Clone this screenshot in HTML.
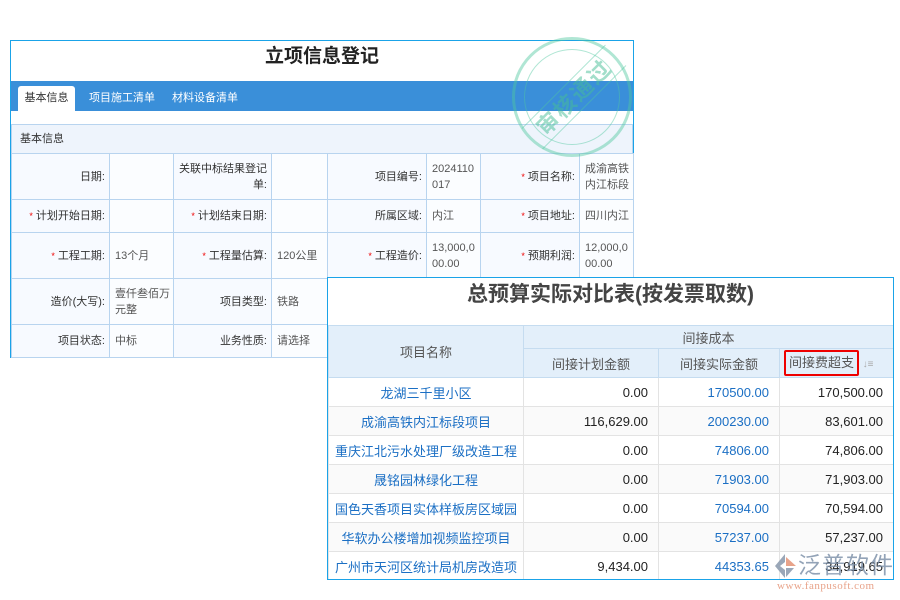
<!DOCTYPE html>
<html><head><meta charset="utf-8"><style>
*{box-sizing:border-box;margin:0;padding:0}
body{width:900px;height:600px;background:#fff;position:relative;overflow:hidden;font-family:"Liberation Sans","Noto Sans CJK SC",sans-serif;font-size:11px;color:#333}
.abs{position:absolute}
#p1{left:10px;top:40px;width:624px;height:318px;border:1px solid #1aa3e8;background:#fff}
#p1 .title{position:absolute;left:0;top:0;width:100%;height:40px;text-align:center;line-height:32px;font-size:19px;font-weight:bold;color:#222}
#tabs{position:absolute;left:0;top:40px;width:100%;height:30px;background:#3a8fd9}
#tabs span{position:absolute;top:5px;color:#fff;font-size:11px;line-height:25px}
#tabs .act{left:7px;width:57px;height:25px;background:#fff;color:#333;text-align:center;border-radius:3px 3px 0 0}
.sec{position:absolute;left:0;top:83px;width:622px;height:30px;background:#eef4fc;border:1px solid #b8d4ef;line-height:28px;padding-left:8px;color:#333}
table{border-collapse:collapse;position:absolute;table-layout:fixed}
#t1{left:0;top:112px;width:622px}
#t1 td{border:1px solid #b8d4ef;background:#f7faff;color:#555;font-size:11px;line-height:16px;padding:0 3px 0 5px;vertical-align:middle;word-break:break-all}
#t1 td.l{text-align:right;color:#333;padding-right:4px}
#t1 td.v{background:#fbfdff}
.r{color:#e00;font-size:9px}
#p2{left:327px;top:277px;width:567px;height:303px;border:1px solid #1aa3e8;background:#fff;overflow:hidden}
#p2 .title{position:absolute;left:0;top:0;width:100%;height:47px;text-align:center;line-height:34px;font-size:21px;font-weight:bold;color:#444}
#t2{left:0;top:47px;width:565px}
#t2 th{background:#e3effa;border:1px solid #c5dcf0;font-weight:normal;color:#555;font-size:13px}
#t2 td{border:1px solid #e3e3e3;height:29px;font-size:13px;padding:0 10px;text-align:right;color:#222}
#t2 td.n{text-align:center;color:#1b6fc4;padding:0 1px;white-space:nowrap;overflow:hidden}
#t2 td.b{color:#1b6fc4}
#t2 tr:nth-child(even) td{background:#fafafa}
</style></head><body>
<div id="p1" class="abs">
 <div class="title">立项信息登记</div>
 <div id="tabs"><span class="act">基本信息</span><span style="left:78px">项目施工清单</span><span style="left:161px">材料设备清单</span></div>
 <div class="sec">基本信息</div>
 <table id="t1">
  <colgroup><col style="width:98px"><col style="width:64px"><col style="width:98px"><col style="width:56px"><col style="width:99px"><col style="width:54px"><col style="width:99px"><col style="width:54px"></colgroup>
  <tr style="height:46px"><td class="l">日期:</td><td class="v"></td><td class="l">关联中标结果登记单:</td><td class="v"></td><td class="l">项目编号:</td><td class="v">2024110017</td><td class="l"><span class="r">*</span> 项目名称:</td><td class="v">成渝高铁内江标段</td></tr>
  <tr style="height:33px"><td class="l"><span class="r">*</span> 计划开始日期:</td><td class="v"></td><td class="l"><span class="r">*</span> 计划结束日期:</td><td class="v"></td><td class="l">所属区域:</td><td class="v">内江</td><td class="l"><span class="r">*</span> 项目地址:</td><td class="v">四川内江</td></tr>
  <tr style="height:46px"><td class="l"><span class="r">*</span> 工程工期:</td><td class="v">13个月</td><td class="l"><span class="r">*</span> 工程量估算:</td><td class="v">120公里</td><td class="l"><span class="r">*</span> 工程造价:</td><td class="v">13,000,000.00</td><td class="l"><span class="r">*</span> 预期利润:</td><td class="v">12,000,000.00</td></tr>
  <tr style="height:46px"><td class="l">造价(大写):</td><td class="v">壹仟叁佰万元整</td><td class="l">项目类型:</td><td class="v">铁路</td><td></td><td></td><td></td><td></td></tr>
  <tr style="height:33px"><td class="l">项目状态:</td><td class="v">中标</td><td class="l">业务性质:</td><td class="v">请选择</td><td></td><td></td><td></td><td></td></tr>
 </table>
</div>
<div class="abs" style="left:512px;top:37px;width:120px;height:120px;border:3px solid rgba(80,200,160,.45);border-radius:50%"></div>
<div class="abs" style="left:524px;top:49px;width:96px;height:96px;border:1px solid rgba(80,200,160,.45);border-radius:50%"></div>
<div class="abs" style="left:515px;top:82px;width:118px;height:30px;transform:rotate(-45deg);border-top:1px solid rgba(80,200,160,.45);border-bottom:1px solid rgba(80,200,160,.45);text-align:center;font-size:22px;font-weight:bold;line-height:30px;color:rgba(70,190,150,.5);letter-spacing:2px">审核通过</div>
<div id="p2" class="abs">
 <div class="title">总预算实际对比表(按发票取数)</div>
 <table id="t2">
  <colgroup><col style="width:195px"><col style="width:135px"><col style="width:121px"><col style="width:114px"></colgroup>
  <tr style="height:23px"><th rowspan="2">项目名称</th><th colspan="3">间接成本</th></tr>
  <tr style="height:29px"><th>间接计划金额</th><th>间接实际金额</th><th style="text-align:left;padding-left:4px;white-space:nowrap"><span style="border:2px solid #e00;border-radius:2px;padding:3px 3px;display:inline-block;line-height:16px">间接费超支</span> <span style="color:#aaa;font-size:10px">↓≡</span></th></tr>
  <tr><td class="n">龙湖三千里小区</td><td>0.00</td><td class="b">170500.00</td><td>170,500.00</td></tr>
  <tr><td class="n">成渝高铁内江标段项目</td><td>116,629.00</td><td class="b">200230.00</td><td>83,601.00</td></tr>
  <tr><td class="n">重庆江北污水处理厂级改造工程</td><td>0.00</td><td class="b">74806.00</td><td>74,806.00</td></tr>
  <tr><td class="n">晟铭园林绿化工程</td><td>0.00</td><td class="b">71903.00</td><td>71,903.00</td></tr>
  <tr><td class="n">国色天香项目实体样板房区域园</td><td>0.00</td><td class="b">70594.00</td><td>70,594.00</td></tr>
  <tr><td class="n">华软办公楼增加视频监控项目</td><td>0.00</td><td class="b">57237.00</td><td>57,237.00</td></tr>
  <tr><td class="n">广州市天河区统计局机房改造项</td><td>9,434.00</td><td class="b">44353.65</td><td>34,919.65</td></tr>
 </table>
</div>
<svg class="abs" style="left:772px;top:553px" width="26" height="26" viewBox="0 0 26 26"><path d="M13 1 L3 13 L13 25 L13 17 L8 13 L13 9Z" fill="#9aa7b8"/><path d="M14 4 L24 13 L14 13Z" fill="#e8a38a"/><path d="M14 15 L22 15 L14 24Z" fill="#9aa7b8"/></svg>
<div class="abs" style="left:798px;top:551px;font-size:23px;color:rgba(120,140,165,.8);letter-spacing:1px;line-height:28px;white-space:nowrap">泛普软件</div>
<div class="abs" style="left:777px;top:580px;font-size:11px;color:#e8a38a;font-family:'Liberation Serif',serif;letter-spacing:.5px;white-space:nowrap">www.fanpusoft.com</div>
</body></html>
